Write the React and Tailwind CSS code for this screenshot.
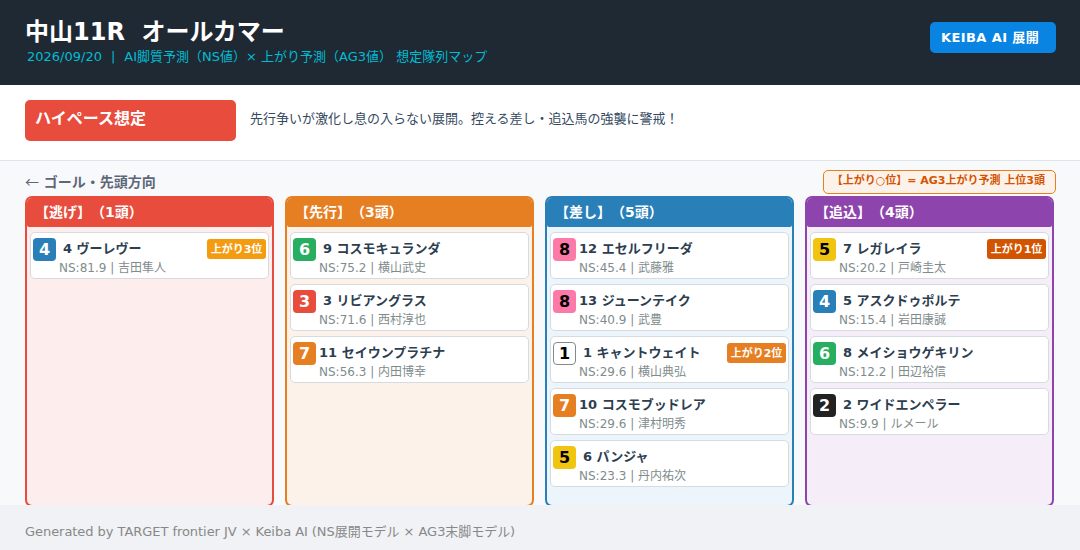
import React from "react";

const gateColors = {
  1: "bg-white text-black border border-[#7f8c8d]",
  2: "bg-[#222222] text-white",
  3: "bg-[#e74c3c] text-white",
  4: "bg-[#2980b9] text-white",
  5: "bg-[#f1c40f] text-black",
  6: "bg-[#27ae60] text-white",
  7: "bg-[#e67e22] text-white",
  8: "bg-[#fd79a8] text-black",
};

const rankColors = {
  1: "bg-[#d35400]",
  2: "bg-[#e67e22]",
  3: "bg-[#f39c12]",
};

const columns = [
  {
    title: "【逃げ】（1頭）",
    border: "border-[#e74c3c]",
    head: "bg-[#e74c3c]",
    bg: "bg-[#fdedec]",
    horses: [{ gate: 4, no: 4, name: "ヴーレヴー", ns: "81.9", jockey: "吉田隼人", rank: 3 }],
  },
  {
    title: "【先行】（3頭）",
    border: "border-[#e67e22]",
    head: "bg-[#e67e22]",
    bg: "bg-[#fdf2e9]",
    horses: [
      { gate: 6, no: 9, name: "コスモキュランダ", ns: "75.2", jockey: "横山武史" },
      { gate: 3, no: 3, name: "リビアングラス", ns: "71.6", jockey: "西村淳也" },
      { gate: 7, no: 11, name: "セイウンプラチナ", ns: "56.3", jockey: "内田博幸" },
    ],
  },
  {
    title: "【差し】（5頭）",
    border: "border-[#2980b9]",
    head: "bg-[#2980b9]",
    bg: "bg-[#ebf5fb]",
    horses: [
      { gate: 8, no: 12, name: "エセルフリーダ", ns: "45.4", jockey: "武藤雅" },
      { gate: 8, no: 13, name: "ジューンテイク", ns: "40.9", jockey: "武豊" },
      { gate: 1, no: 1, name: "キャントウェイト", ns: "29.6", jockey: "横山典弘", rank: 2 },
      { gate: 7, no: 10, name: "コスモブッドレア", ns: "29.6", jockey: "津村明秀" },
      { gate: 5, no: 6, name: "パンジャ", ns: "23.3", jockey: "丹内祐次" },
    ],
  },
  {
    title: "【追込】（4頭）",
    border: "border-[#8e44ad]",
    head: "bg-[#8e44ad]",
    bg: "bg-[#f5eef8]",
    horses: [
      { gate: 5, no: 7, name: "レガレイラ", ns: "20.2", jockey: "戸崎圭太", rank: 1 },
      { gate: 4, no: 5, name: "アスクドゥポルテ", ns: "15.4", jockey: "岩田康誠" },
      { gate: 6, no: 8, name: "メイショウゲキリン", ns: "12.2", jockey: "田辺裕信" },
      { gate: 2, no: 2, name: "ワイドエンペラー", ns: "9.9", jockey: "ルメール" },
    ],
  },
];

const HorseCard = ({ horse }) => (
  <div className="flex items-start h-[47px] bg-white border border-[#d5dbdf] rounded-[5px] px-[2px]">
    <div className={`flex items-center justify-center shrink-0 w-[23px] h-[23px] mt-[5px] rounded-[4px] text-[16px] font-bold leading-none ${gateColors[horse.gate]}`}>
      {horse.gate}
    </div>
    <div className="flex-1 min-w-0 ml-[3px]">
      <div className="flex items-center justify-between h-[20px] mt-[6px]">
        <span className={`pb-[2px] text-[13px] font-bold leading-none text-[#2c3e50] whitespace-nowrap ${horse.no < 10 ? "pl-[4px]" : ""}`}>
          {horse.no} {horse.name}
        </span>
        {horse.rank && (
          <span className={`flex items-center justify-center w-[59px] h-[20px] rounded-[3px] text-[11px] font-bold leading-none text-white whitespace-nowrap ${rankColors[horse.rank]}`}>
            上がり{horse.rank}位
          </span>
        )}
      </div>
      <div className="text-[12px] leading-[16px] mt-[1px] text-[#7f8c8d] whitespace-nowrap">
        NS:{horse.ns} | {horse.jockey}
      </div>
    </div>
  </div>
);

const App = () => {
  return (
    <div className="flex flex-col w-[1080px] h-[550px] overflow-hidden bg-[#f8f9fb] [text-spacing-trim:space-all] font-['DejaVu_Sans','Noto_Sans_CJK_JP',sans-serif]">
      <header className="flex justify-between items-start h-[85px] shrink-0 bg-[#1f2933] pl-[25px] pr-[24px] pt-[16px]">
        <div>
          <h1 className="text-[24px] font-bold leading-[32px] text-white whitespace-pre">中山11R  オールカマー</h1>
          <p className="text-[13px] leading-[18px] pl-[2px] text-[#00bcd4] whitespace-pre">
            2026/09/20<span className="px-[9px]">|</span>AI脚質予測（NS値）× 上がり予測（AG3値） 想定隊列マップ
          </p>
        </div>
        <div className="flex items-center h-[31px] mt-[6px] px-[11px] w-[126px] rounded-[5px] bg-[#0984e3] text-[13px] font-bold tracking-[0.4px] text-white whitespace-nowrap">
          KEIBA AI 展開
        </div>
      </header>

      <section className="flex items-center h-[76px] shrink-0 bg-white border-b border-[#dfe4ea] pl-[25px] pb-[5px]">
        <div className="flex items-center w-[211px] h-[41px] pl-[10px] pb-[2px] rounded-[5px] bg-[#e74c3c] text-[16px] font-bold text-white">
          ハイペース想定
        </div>
        <p className="ml-[14px] pb-[2px] text-[13px] text-[#34495e]">
          先行争いが激化し息の入らない展開。控える差し・追込馬の強襲に警戒！
        </p>
      </section>

      <main className="flex flex-col flex-1 min-h-0 overflow-hidden pl-[25px] pr-[24px]">
        <div className="flex justify-between items-center h-[35px] shrink-0 pt-[6px]">
          <span className="text-[14px] font-bold text-[#5d6778]">
            <span className="font-normal font-['Noto_Sans_CJK_JP',sans-serif]">←</span> ゴール・先頭方向
          </span>
          <span className="flex items-center justify-end w-[233px] h-[24px] pr-[10px] rounded-[5px] border border-[#e67e22] bg-[#fdf2e9] text-[11px] font-bold text-[#d35400] whitespace-nowrap">
            【上がり○位】= AG3上がり予測 上位3頭
          </span>
        </div>
        <div className="grid grid-cols-[repeat(4,249px)] gap-[11px] h-[311px] shrink-0">
          {columns.map((col) => (
            <div key={col.title} className={`flex flex-col border-2 rounded-[7px] overflow-hidden ${col.border} ${col.bg}`}>
              <div className={`flex items-center h-[29px] shrink-0 pl-[8px] rounded-b-[2px] text-[14px] font-bold text-white ${col.head}`}>
                {col.title}
              </div>
              <div className="flex flex-col gap-[5px] pt-[5px] px-[3px]">
                {col.horses.map((horse) => (
                  <HorseCard key={horse.no} horse={horse} />
                ))}
              </div>
            </div>
          ))}
        </div>
      </main>

      <footer className="flex items-center h-[45px] shrink-0 bg-[#f0f2f5] pl-[25px] pt-[8px] text-[13px] tracking-[-0.05px] text-[#888888]">
        Generated by TARGET frontier JV × Keiba AI (NS展開モデル × AG3末脚モデル)
      </footer>
    </div>
  );
};

export default App;
